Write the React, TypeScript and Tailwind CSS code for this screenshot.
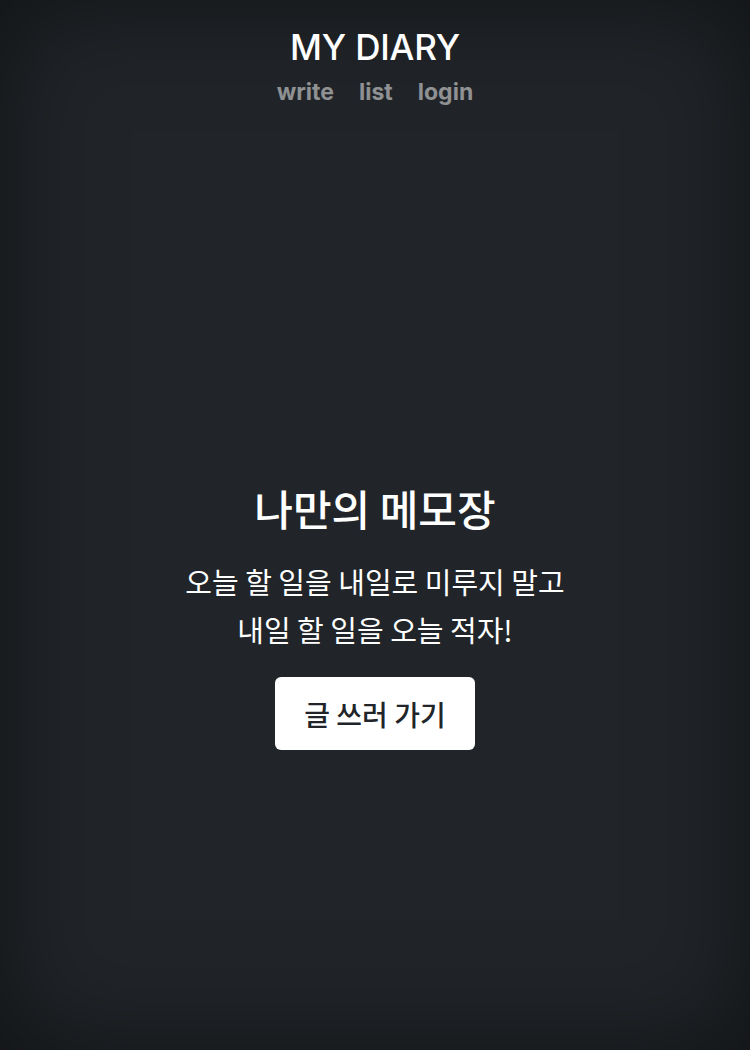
export default function App() {
  return (
    <div className="min-h-screen w-full bg-[#212529] shadow-[inset_0_0_110px_rgba(0,0,0,0.5)] text-white flex flex-col items-center [font-family:Inter,'Noto_Sans_CJK_KR',sans-serif]">
      <header className="flex flex-col items-center pt-[26px]">
        <h3 className="text-[35px] font-medium leading-[42px] tracking-[-0.2px]">MY DIARY</h3>
        <nav className="flex gap-[25px] mt-[9px] text-[23px] font-bold leading-[30px] text-white/50">
          <a href="#">write</a>
          <a href="#">list</a>
          <a href="#">login</a>
        </nav>
      </header>

      <main className="flex flex-col items-center mt-[374px] text-center [font-family:'Noto_Sans_CJK_KR',Inter,sans-serif]">
        <h1 className="text-[42px] font-medium leading-[54px]">나만의 메모장</h1>
        <p className="mt-[22px] text-[29px] leading-[48px]">
          오늘 할 일을 내일로 미루지 말고
          <br />
          내일 할 일을 오늘 적자!
        </p>
        <a
          href="#"
          className="mt-[24px] w-[200px] h-[73px] flex items-center justify-center bg-white text-[#212529] rounded-[6px] text-[28px] font-medium"
        >
          글 쓰러 가기
        </a>
      </main>
    </div>
  );
}
